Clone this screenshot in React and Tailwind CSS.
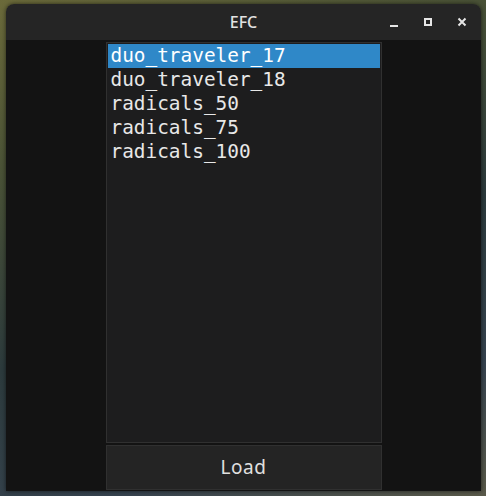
import React from 'react';

const items = ['duo_traveler_17', 'duo_traveler_18', 'radicals_50', 'radicals_75', 'radicals_100'];

export default function App() {
  const selected = 0;

  return (
    <div className="w-[486px] h-[496px] overflow-hidden bg-[linear-gradient(160deg,#6b6a3a_0%,#4a5236_25%,#2c3a3c_55%,#36434f_80%,#5a5a4a_100%)] pt-[4px] pl-[6px] pr-[5px] pb-[5px]">
      <div className="flex h-full flex-col overflow-hidden rounded-t-[8px] shadow-[0_0_4px_rgba(0,0,0,0.6)]">
        {/* Title bar */}
        <div className="relative flex h-[36px] shrink-0 items-center justify-center bg-[#252525]">
          <span className="font-['Noto_Sans',sans-serif] text-[16px] font-medium text-[#e2e2e2]">EFC</span>
          <div className="absolute right-0 top-0 flex h-full items-center">
            <div className="flex h-full w-[34px] items-center justify-center">
              <div className="mt-[8px] h-[2px] w-[8px] bg-[#e6e6e6]" />
            </div>
            <div className="flex h-full w-[34px] items-center justify-center">
              <div className="h-[8px] w-[8px] border-2 border-[#e6e6e6]" />
            </div>
            <div className="mr-[2px] flex h-full w-[34px] items-center justify-center">
              <svg width="10" height="10" viewBox="0 0 10 10">
                <path d="M1.5 1.5 L8.5 8.5 M8.5 1.5 L1.5 8.5" stroke="#e6e6e6" strokeWidth="2" />
              </svg>
            </div>
          </div>
        </div>

        {/* Body */}
        <div className="flex flex-1 flex-col items-center gap-[2px] bg-[#131313] pt-[2px] pb-[1px]">
          <div className="flex w-[276px] flex-1 flex-col border border-[#303030] bg-[#1d1d1e] p-px">
            {items.map((item, i) => (
              <div
                key={item}
                className={`h-[24px] pl-[3px] font-['DejaVu_Sans_Mono',monospace] text-[19.4px] leading-[24px] text-[#e8e8e8] ${
                  i === selected ? 'bg-[#2f88c8] text-white' : ''
                }`}
              >
                {item}
              </div>
            ))}
          </div>
          <button className="h-[45px] w-[276px] shrink-0 border border-[#303030] bg-[#242424] font-['Noto_Sans',sans-serif] text-[19px] tracking-[0.5px] text-[#e0e0e0]">
            Load
          </button>
        </div>
      </div>
    </div>
  );
}
